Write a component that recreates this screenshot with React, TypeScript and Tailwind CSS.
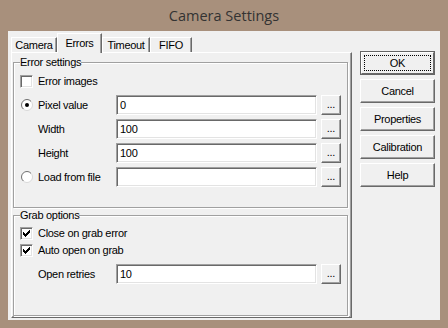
import React from "react";

const raised =
  "border border-t-white border-l-white border-r-[#696969] border-b-[#696969] shadow-[inset_-1px_-1px_0_#a0a0a0]";
const sunken =
  "border border-t-[#a0a0a0] border-l-[#a0a0a0] border-r-white border-b-white shadow-[inset_1px_1px_0_#696969,inset_-1px_-1px_0_#e3e3e3]";

const checkPixels: [number, number, number][] = [
  [6, 0, 1],
  [5, 1, 2],
  [0, 2, 1],
  [4, 2, 3],
  [0, 3, 2],
  [3, 3, 3],
  [0, 4, 5],
  [1, 5, 3],
  [2, 6, 1],
];

function Check({ checked }: { checked?: boolean }) {
  return (
    <div className={`w-[13px] h-[13px] bg-white flex items-center justify-center shrink-0 ${sunken}`}>
      {checked && (
        <svg width="7" height="7" viewBox="0 0 7 7" shapeRendering="crispEdges">
          {checkPixels.map(([x, y, w], i) => (
            <rect key={i} x={x} y={y} width={w} height={1} fill="#000" />
          ))}
        </svg>
      )}
    </div>
  );
}

function Radio({ checked }: { checked?: boolean }) {
  return (
    <div className="w-[13px] h-[13px] flex items-center justify-end shrink-0">
      <svg width="12" height="12" viewBox="0 0 12 12">
        <defs>
          <linearGradient id="radioEdge" x1="0" y1="0" x2="1" y2="1">
            <stop offset="0.5" stopColor="#6f6f6f" />
            <stop offset="0.5" stopColor="#d8d8d8" />
          </linearGradient>
        </defs>
        <circle cx="6" cy="6" r="5.5" fill="#fff" stroke="url(#radioEdge)" strokeWidth="1" />
        <circle cx="6" cy="6" r="4.5" fill="none" stroke="#fff" strokeWidth="0" />
        {checked && <circle cx="6" cy="6" r="2" fill="#000" />}
      </svg>
    </div>
  );
}

function TextBox({ value }: { value: string }) {
  return (
    <div className={`w-[201px] h-[20px] bg-white flex items-center pl-[3px] shrink-0 ${sunken}`}>
      {value}
    </div>
  );
}

function Dots() {
  return (
    <div className={`w-[20px] h-[20px] bg-[#f0f0f0] flex items-end justify-center pb-[4px] ml-[4px] shrink-0 leading-none ${raised}`}>
      ...
    </div>
  );
}

function FieldRow({
  label,
  value,
  lead,
  h = "h-[24px]",
}: {
  label: string;
  value: string;
  lead?: React.ReactNode;
  h?: string;
}) {
  return (
    <div className={`flex items-center ${h}`}>
      <div className="w-[13px] flex justify-end shrink-0">{lead}</div>
      <div className="w-[83px] pl-[5px] shrink-0">{label}</div>
      <TextBox value={value} />
      <Dots />
    </div>
  );
}

function Tab({ label, selected, w }: { label: string; selected?: boolean; w: string }) {
  if (selected) {
    return (
      <div
        className={`${w} h-[20px] -mb-[1px] relative z-10 bg-[#f0f0f0] border-l border-t border-r border-l-white border-t-white border-r-[#696969] shadow-[inset_-1px_0_0_#a0a0a0] flex items-start justify-center pt-[1px]`}
      >
        {label}
      </div>
    );
  }
  return (
    <div
      className={`${w} h-[15px] bg-[#f0f0f0] border-l border-t border-r border-l-white border-t-white border-r-[#696969] shadow-[inset_-1px_0_0_#a0a0a0] flex items-center justify-center`}
    >
      {label}
    </div>
  );
}

function Btn({ label }: { label: string }) {
  return (
    <div className={`h-[24px] w-[75px] bg-[#f0f0f0] flex items-center justify-center ${raised}`}>
      {label}
    </div>
  );
}

const fieldsetCls =
  "w-[335px] border border-[#a0a0a0] shadow-[inset_1px_1px_0_#fff,1px_1px_0_#fff] m-0 p-0 min-w-0";

export default function App() {
  return (
    <div className="w-[448px] h-[328px] bg-[#a8907c] flex flex-col font-['Liberation_Sans',Arial,sans-serif] text-[11px] tracking-[-0.3px] text-black">
      <div className="h-[31px] shrink-0 flex items-center justify-center font-['Open_Sans',sans-serif] text-[14.5px] tracking-normal text-[#333] pt-[1px]">
        Camera Settings
      </div>
      <div className="mx-[8px] mb-[8px] flex-1 bg-[#f0f0f0] flex pt-[2px] pl-[3px] pb-[2px]">
        {/* Tab control */}
        <div className="w-[341px] flex flex-col">
          <div className="h-[19px] flex items-end">
            <Tab label="Camera" w="w-[46px]" />
            <Tab label="Errors" w="w-[45px]" selected />
            <Tab label="Timeout" w="w-[48px]" />
            <Tab label="FIFO" w="w-[42px]" />
          </div>
          <div className="flex-1 border-l border-t border-r border-b border-l-white border-t-white border-r-[#696969] border-b-[#696969] shadow-[inset_-1px_-1px_0_#a0a0a0] flex flex-col">
            <fieldset className={`${fieldsetCls} h-[152px] mt-[3px] ml-[1px]`}>
              <legend className="ml-[6px] p-0 leading-[13px] bg-[#f0f0f0]">Error settings</legend>
              <div className="pl-[6px] flex flex-col">
                <div className="flex items-center h-[24px]">
                  <Check />
                  <div className="pl-[5px]">Error images</div>
                </div>
                <FieldRow label="Pixel value" value="0" lead={<Radio checked />} />
                <FieldRow label="Width" value="100" />
                <FieldRow label="Height" value="100" />
                <FieldRow label="Load from file" value="" lead={<Radio />} />
              </div>
            </fieldset>
            <fieldset className={`${fieldsetCls} h-[107px] mt-[1px] ml-[1px]`}>
              <legend className="ml-[6px] p-0 leading-[13px] bg-[#f0f0f0]">Grab options</legend>
              <div className="pl-[6px] pt-[3px] flex flex-col">
                <div className="flex items-center h-[17px]">
                  <Check checked />
                  <div className="pl-[5px]">Close on grab error</div>
                </div>
                <div className="flex items-center h-[17px]">
                  <Check checked />
                  <div className="pl-[5px]">Auto open on grab</div>
                </div>
                <div className="mt-[3px]">
                  <FieldRow label="Open retries" value="10" />
                </div>
              </div>
            </fieldset>
          </div>
        </div>
        {/* Buttons */}
        <div className="ml-[8px] mt-[18px] flex flex-col gap-[4px]">
          <div className="h-[24px] w-[75px] border border-[#646464] flex">
            <div className="flex-1 bg-[#f0f0f0] border border-t-white border-l-white border-r-[#696969] border-b-[#696969] p-[2px] flex">
              <div className="flex-1 border border-dotted border-black flex items-center justify-center">OK</div>
            </div>
          </div>
          <Btn label="Cancel" />
          <Btn label="Properties" />
          <Btn label="Calibration" />
          <Btn label="Help" />
        </div>
      </div>
    </div>
  );
}
